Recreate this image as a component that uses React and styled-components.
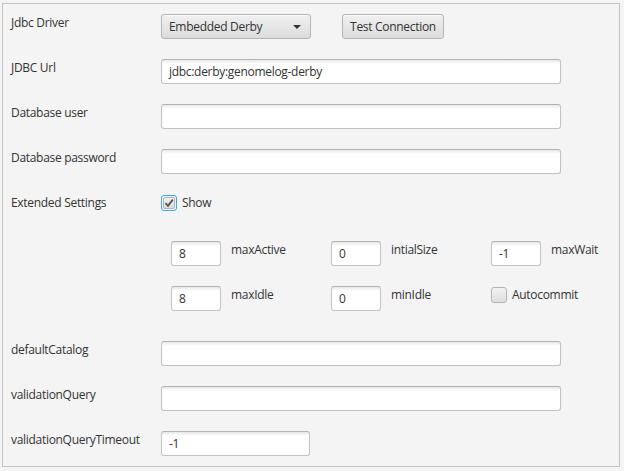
import React from "react";
import styled, { createGlobalStyle } from "styled-components";

const GlobalStyle = createGlobalStyle`
  html, body { margin: 0; padding: 0; background: #f4f4f4; }
  body {
    font-family: "Open Sans", "Noto Sans", sans-serif;
    font-size: 12px;
    letter-spacing: -0.3px;
    color: #333333;
  }
  * { box-sizing: border-box; }
`;

const Panel = styled.div`
  margin: 3px 0 0 2px;
  width: 618px;
  height: 464px;
  border: 1px solid #c3c3c3;
  padding: 10px 0 0 8px;
  display: flex;
  flex-direction: column;
  gap: 20px;
`;

const Row = styled.div`
  display: flex;
  align-items: flex-start;
  height: 25px;
`;

const Label = styled.div`
  width: 150px;
  flex: none;
  line-height: 16px;
  padding-top: 1px;
  white-space: nowrap;
`;

const Controls = styled.div`
  display: flex;
  align-items: center;
  gap: ${(p) => p.$gap || 0}px;
  height: 25px;
`;

const TextField = styled.div`
  width: ${(p) => p.$w}px;
  height: 25px;
  flex: none;
  border: 1px solid #c2c2c2;
  border-top-color: #b2b2b2;
  border-radius: 3px;
  background: linear-gradient(to bottom, #e8e8e8 0px, #ffffff 4px, #ffffff 100%);
  display: flex;
  align-items: center;
  padding: 0 7px;
  color: #333333;
  white-space: nowrap;
  overflow: hidden;
`;

const ButtonBase = styled.div`
  width: ${(p) => p.$w}px;
  height: 25px;
  flex: none;
  border: 1px solid #b4b4b4;
  border-radius: 3px;
  background: linear-gradient(to bottom, #f0f0f0 0%, #e6e6e6 50%, #dcdcdc 100%);
  box-shadow: inset 0 1px 0 #fafafa;
  display: flex;
  align-items: center;
  color: #333333;
  white-space: nowrap;
`;

const Combo = styled(ButtonBase)`
  padding: 0 8px 0 7px;
  justify-content: space-between;
`;

const Arrow = styled.span`
  width: 0;
  height: 0;
  border-left: 4px solid transparent;
  border-right: 4px solid transparent;
  border-top: 4px solid #333333;
  margin-right: 1px;
`;

const Button = styled(ButtonBase)`
  justify-content: center;
`;

const CheckRow = styled.div`
  display: flex;
  align-items: center;
  gap: 5px;
  height: 16px;
  line-height: 16px;
  margin-top: ${(p) => p.$top || 0}px;
`;

const CheckBox = styled.div`
  width: 16px;
  height: 16px;
  flex: none;
  border-radius: 3px;
  border: 1px solid ${(p) => (p.$focused ? "#3da9e0" : "#b3b3b3")};
  background: ${(p) =>
    p.$focused ? "#e9f4fa" : "linear-gradient(to bottom, #f2f2f2, #dedede)"};
  padding: 1px;
  display: flex;
`;

const CheckInner = styled.div`
  flex: 1;
  border: 1px solid #b5b5b5;
  border-radius: 2px;
  background: linear-gradient(to bottom, #f0f0f0, #dcdcdc);
  display: flex;
  align-items: center;
  justify-content: center;
`;

const Extended = styled.div`
  margin: 2px 0 10px 160px;
  display: grid;
  grid-template-columns: repeat(3, 160px);
  row-gap: 20px;
`;

const Cell = styled.div`
  display: flex;
  align-items: flex-start;
  gap: 10px;
  height: 25px;
  line-height: 16px;
`;

const CellLabel = styled.div`
  white-space: nowrap;
  padding-top: 1px;
`;

function Field({ label, w, value }) {
  return (
    <Row>
      <Label>{label}</Label>
      <TextField $w={w}>{value}</TextField>
    </Row>
  );
}

function SmallField({ value, label }) {
  return (
    <Cell>
      <TextField $w={50}>{value}</TextField>
      <CellLabel>{label}</CellLabel>
    </Cell>
  );
}

export default function App() {
  return (
    <>
      <GlobalStyle />
      <Panel>
        <Row>
          <Label>Jdbc Driver</Label>
          <Controls $gap={31}>
            <Combo $w={150}>
              <span>Embedded Derby</span>
              <Arrow />
            </Combo>
            <Button $w={102}>Test Connection</Button>
          </Controls>
        </Row>
        <Field label="JDBC Url" w={400} value="jdbc:derby:genomelog-derby" />
        <Field label="Database user" w={400} value="" />
        <Field label="Database password" w={400} value="" />
        <Row>
          <Label>Extended Settings</Label>
          <CheckRow $top={1}>
            <CheckBox $focused>
              <CheckInner>
                <svg width="10" height="10" viewBox="0 0 10 10">
                  <path d="M1.5 5.2 L4 7.8 L8.8 1.6" fill="none" stroke="#555" strokeWidth="1.8" />
                </svg>
              </CheckInner>
            </CheckBox>
            <span>Show</span>
          </CheckRow>
        </Row>
        <Extended>
          <SmallField value="8" label="maxActive" />
          <SmallField value="0" label="intialSize" />
          <SmallField value="-1" label="maxWait" />
          <SmallField value="8" label="maxIdle" />
          <SmallField value="0" label="minIdle" />
          <Cell>
            <CheckRow $top={1}>
              <CheckBox />
              <span>Autocommit</span>
            </CheckRow>
          </Cell>
        </Extended>
        <Field label="defaultCatalog" w={400} value="" />
        <Field label="validationQuery" w={400} value="" />
        <Field label="validationQueryTimeout" w={149} value="-1" />
      </Panel>
    </>
  );
}
